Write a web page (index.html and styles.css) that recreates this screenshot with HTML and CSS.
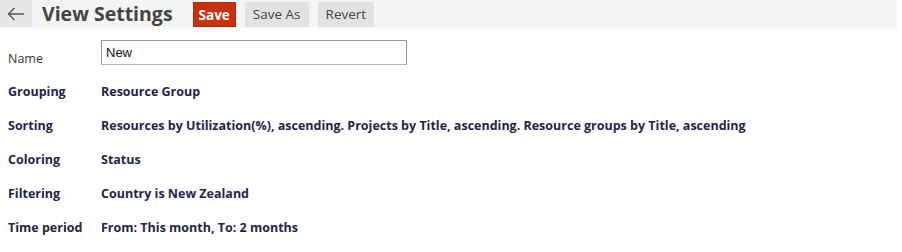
FILE: index.html
```html
<!DOCTYPE html>
<html>
<head>
<meta charset="utf-8">
<link rel="stylesheet" href="styles.css">
</head>
<body>
<header class="toolbar">
  <button class="back" aria-label="Back">
    <svg width="18" height="14" viewBox="0 0 18 14"><path d="M17 7H1.5M7.5 1L1.5 7l6 6" fill="none" stroke="#555" stroke-width="1.4"/></svg>
  </button>
  <h1 class="title">View Settings</h1>
  <div class="actions">
    <button class="btn btn-primary">Save</button>
    <button class="btn">Save As</button>
    <button class="btn">Revert</button>
  </div>
</header>
<main class="settings">
  <div class="row row-name">
    <div class="label plain">Name</div>
    <div class="value"><input class="name-input" type="text" value="New"></div>
  </div>
  <div class="row">
    <div class="label">Grouping</div>
    <div class="value">Resource Group</div>
  </div>
  <div class="row">
    <div class="label">Sorting</div>
    <div class="value">Resources by Utilization(%), ascending. Projects by Title, ascending. Resource groups by Title, ascending</div>
  </div>
  <div class="row">
    <div class="label">Coloring</div>
    <div class="value">Status</div>
  </div>
  <div class="row">
    <div class="label">Filtering</div>
    <div class="value">Country is New Zealand</div>
  </div>
  <div class="row">
    <div class="label">Time period</div>
    <div class="value">From: This month, To: 2 months</div>
  </div>
</main>
</body>
</html>
```

FILE: styles.css
```css
* { box-sizing: border-box; }
html, body { margin: 0; padding: 0; background: #fff; }
body {
  font-family: "Open Sans", "DejaVu Sans", sans-serif;
  color: #24244a;
}
.toolbar {
  display: flex;
  align-items: center;
  height: 29px;
  width: 897px;
  background: #f4f4f4;
  border-bottom: 2px solid #fafafa;
}
.back {
  width: 32px;
  height: 27px;
  border: none;
  background: #e7e7e7;
  padding: 0;
  display: flex;
  align-items: center;
  justify-content: center;
  margin: 0;
}
.title {
  margin: 0 0 0 10px;
  font-size: 19.5px;
  font-weight: 700;
  color: #444;
  line-height: 27px;
}
.actions {
  display: flex;
  gap: 9px;
  margin-left: 20px;
  align-self: flex-start;
  padding-top: 2px;
}
.btn {
  height: 25px;
  border: none;
  background: #e2e2e2;
  color: #444;
  font-family: "Open Sans", "DejaVu Sans", sans-serif;
  font-size: 13.5px;
  padding: 0 8px;
  margin: 0;
  line-height: 25px;
}
.btn-primary {
  background: #c9300f;
  color: #fff;
  font-weight: 700;
  padding: 0 5px;
  border: 1px solid #b02a0c;
}
.settings {
  padding: 11px 0 0 8px;
}
.row {
  display: flex;
  align-items: center;
  height: 34px;
  font-size: 12.5px;
  font-weight: 700;
}
.row-name {
  align-items: flex-start;
}
.label {
  width: 93px;
  flex: none;
}
.label.plain {
  font-weight: 400;
  color: #333;
  padding-top: 10px;
}
.name-input {
  width: 306px;
  height: 25px;
  border: 1px solid #999;
  border-bottom-color: #b5b5b5;
  font-family: "Liberation Sans", Arial, sans-serif;
  font-size: 13px;
  color: #111;
  padding: 0 4px;
  margin: 0;
  outline: none;
}
```
